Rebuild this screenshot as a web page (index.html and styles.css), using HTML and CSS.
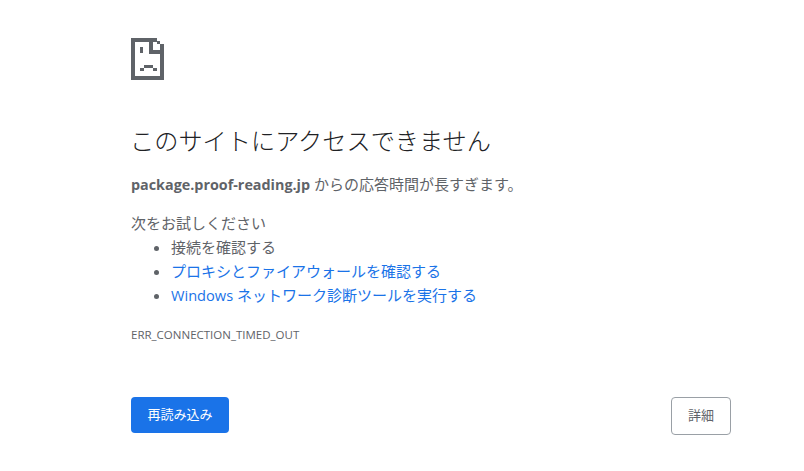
FILE: index.html
```html
<!DOCTYPE html>
<html lang="ja">
<head>
    <meta charset="UTF-8">
    <title>package.proof-reading.jp</title>
    <link rel="stylesheet" href="styles.css">
</head>
<body>
    <div class="interstitial">
        <svg class="error-icon" width="33" height="42" viewBox="0 0 33 42" shape-rendering="crispEdges" fill="#5f6368">
            <rect x="0" y="0" width="26" height="4"/>
            <rect x="0" y="0" width="4" height="42"/>
            <rect x="0" y="38" width="33" height="4"/>
            <rect x="29" y="9" width="4" height="33"/>
            <rect x="18" y="0" width="4" height="16"/>
            <rect x="18" y="12" width="15" height="4"/>
            <rect x="26" y="3" width="3" height="3"/>
            <rect x="29" y="6" width="4" height="3"/>
            <rect x="9" y="9" width="3" height="6"/>
            <rect x="13" y="27" width="9" height="3"/>
            <rect x="9" y="30" width="4" height="3"/>
            <rect x="22" y="30" width="4" height="3"/>
        </svg>
        <h1 class="heading">このサイトにアクセスできません</h1>
        <p class="summary"><strong class="domain">package.proof-reading.jp</strong> からの応答時間が長すぎます。</p>
        <div class="suggestions">
            <p class="suggestions-title">次をお試しください</p>
            <ul class="suggestions-list">
                <li>接続を確認する</li>
                <li><a href="#">プロキシとファイアウォールを確認する</a></li>
                <li><a href="#"><span class="latin">Windows</span> ネットワーク診断ツールを実行する</a></li>
            </ul>
        </div>
        <div class="error-code">ERR_CONNECTION_TIMED_OUT</div>
        <div class="buttons">
            <button class="reload-button">再読み込み</button>
            <button class="details-button">詳細</button>
        </div>
    </div>
</body>
</html>
```

FILE: styles.css
```css
html, body {
    margin: 0;
    height: 100%;
}
body {
    background: #fff;
    color: #5f6368;
    font-family: "Open Sans", "Noto Sans CJK JP", sans-serif;
    font-size: 15px;
    overflow: hidden;
}
.interstitial {
    box-sizing: border-box;
    width: 600px;
    margin-left: 131px;
    padding-top: 38px;
}
.error-icon {
    display: block;
}
.heading {
    margin: 44px 0 0 -1px;
    color: #202124;
    font-size: 24.2px;
    font-weight: 300;
    line-height: 34px;
}
.summary {
    margin: 14px 0 0;
    line-height: 24px;
}
.domain {
    font-size: 14.35px;
}
.latin {
    font-size: 14.6px;
}
.suggestions {
    margin-top: 14px;
}
.suggestions-title {
    margin: 0;
    line-height: 24px;
}
.suggestions-list {
    margin: 0;
    padding-left: 40px;
}
.suggestions-list li {
    line-height: 24px;
}
.suggestions-list a {
    color: #1a73e8;
    text-decoration: none;
}
.error-code {
    margin-top: 20px;
    font-size: 11.5px;
    line-height: 16px;
}
.buttons {
    display: flex;
    justify-content: space-between;
    margin-top: 54px;
}
.reload-button, .details-button {
    padding: 0 0 4px;
    font-family: inherit;
    font-size: 13px;
    border-radius: 4px;
    cursor: pointer;
}
.reload-button {
    width: 98px;
    height: 36px;
    background: #1a73e8;
    color: #fff;
    border: none;
}
.details-button {
    width: 60px;
    height: 38px;
    background: #fff;
    color: #5f6368;
    border: 1px solid #9aa0a6;
}
```
